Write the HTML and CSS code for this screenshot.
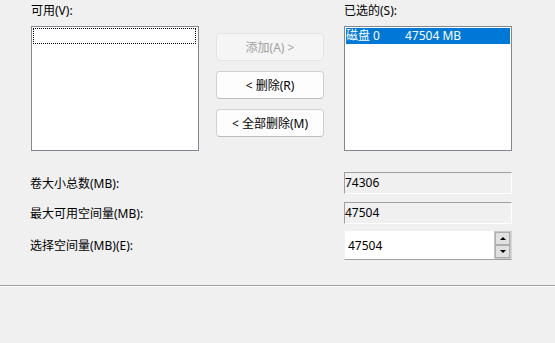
FILE: index.html
```html
<!DOCTYPE html>
<html lang="zh-CN">
<head>
    <meta charset="UTF-8">
    <title>扩展卷</title>
    <link rel="stylesheet" href="styles.css">
</head>
<body>
    <div class="dialog">
        <div class="picker">
            <div class="col">
                <div class="label">可用(V):</div>
                <div class="listbox">
                    <div class="focus-row"></div>
                </div>
            </div>
            <div class="buttons">
                <button class="btn" disabled>添加(A) &gt;</button>
                <button class="btn">&lt; 删除(R)</button>
                <button class="btn">&lt; 全部删除(M)</button>
            </div>
            <div class="col">
                <div class="label">已选的(S):</div>
                <div class="listbox">
                    <div class="item selected"><span class="disk">磁盘 0</span>47504 MB</div>
                </div>
            </div>
        </div>

        <div class="sizes">
            <div class="row">
                <span class="row-label">卷大小总数(MB):</span>
                <div class="field readonly">74306</div>
            </div>
            <div class="row">
                <span class="row-label">最大可用空间量(MB):</span>
                <div class="field readonly">47504</div>
            </div>
            <div class="row spin-row">
                <span class="row-label">选择空间量(MB)(E):</span>
                <div class="field spin">
                    <span class="value">47504</span>
                    <div class="spinner">
                        <div class="arrow up"></div>
                        <div class="arrow down"></div>
                    </div>
                </div>
            </div>
        </div>
    </div>
    <div class="separator"></div>
</body>
</html>
```

FILE: styles.css
```css
html, body {
    margin: 0;
    height: 100%;
    background: #f0f0f0;
    font-family: "Segoe UI", "Noto Sans", "Noto Sans CJK SC", sans-serif;
    font-size: 12px;
    color: #000;
}

.dialog {
    padding: 0 0 0 31px;
    height: 285px;
    box-sizing: border-box;
}

.picker {
    display: flex;
    width: 481px;
}

.col {
    width: 168px;
}

.label {
    height: 21px;
    line-height: 21px;
    margin-bottom: 5px;
}

.listbox {
    height: 125px;
    box-sizing: border-box;
    border: 1px solid #828790;
    background: #fff;
    padding: 1px;
}

.focus-row {
    height: 16px;
    box-sizing: border-box;
    border: 1px dotted #000;
    margin-right: 1px;
}

.item {
    height: 16px;
    line-height: 16px;
    white-space: nowrap;
}

.item.selected {
    background: #0078d7;
    color: #fff;
}

.disk {
    display: inline-block;
    width: 59px;
}

.buttons {
    display: flex;
    flex-direction: column;
    gap: 10px;
    margin: 33px 20px 0 17px;
    width: 108px;
}

.btn {
    height: 28px;
    box-sizing: border-box;
    font: inherit;
    color: #000;
    background: #fdfdfd;
    border: 1px solid #d0d0d0;
    border-bottom-color: #bcbcbc;
    border-radius: 4px;
    padding: 0;
}

.btn:disabled {
    background: #f5f5f5;
    border-color: #e3e3e3;
    color: #a0a0a0;
}

.sizes {
    margin-top: 21px;
    display: flex;
    flex-direction: column;
}

.row {
    display: flex;
    align-items: center;
    height: 22px;
    margin-bottom: 8px;
}

.row.spin-row {
    height: 30px;
    margin-top: -2px;
}

.row-label {
    width: 313px;
    margin-left: -1px;
    padding-left: 0;
}

.field {
    width: 168px;
    height: 22px;
    box-sizing: border-box;
    line-height: 19px;
    margin-left: 1px;
}

.readonly {
    border: 1px solid #fff;
    border-top-color: #a0a0a0;
    border-left-color: #a0a0a0;
    background: #f0f0f0;
}

.spin {
    display: flex;
    align-items: center;
    justify-content: space-between;
    height: 30px;
    background: #fff;
    border: 1px solid #f0f0f0;
    border-bottom-color: #a0a0a0;
    border-right-color: #d8d8d8;
    padding: 0 0 0 3px;
}

.spinner {
    display: flex;
    flex-direction: column;
    width: 17px;
    height: 28px;
    box-sizing: border-box;
    border: 1px solid #c8c8c8;
    background: #f0f0f0;
}

.arrow {
    flex: 1;
    position: relative;
    border: 1px solid #adadad;
    background: #e1e1e1;
}

.arrow::after {
    content: "";
    position: absolute;
    left: 4px;
    top: 4px;
    border-left: 3px solid transparent;
    border-right: 3px solid transparent;
}

.arrow.up::after {
    border-bottom: 3px solid #000;
}

.arrow.down::after {
    border-top: 3px solid #000;
}

.separator {
    height: 1px;
    background: #a0a0a0;
    border-bottom: 1px solid #fff;
}
```
